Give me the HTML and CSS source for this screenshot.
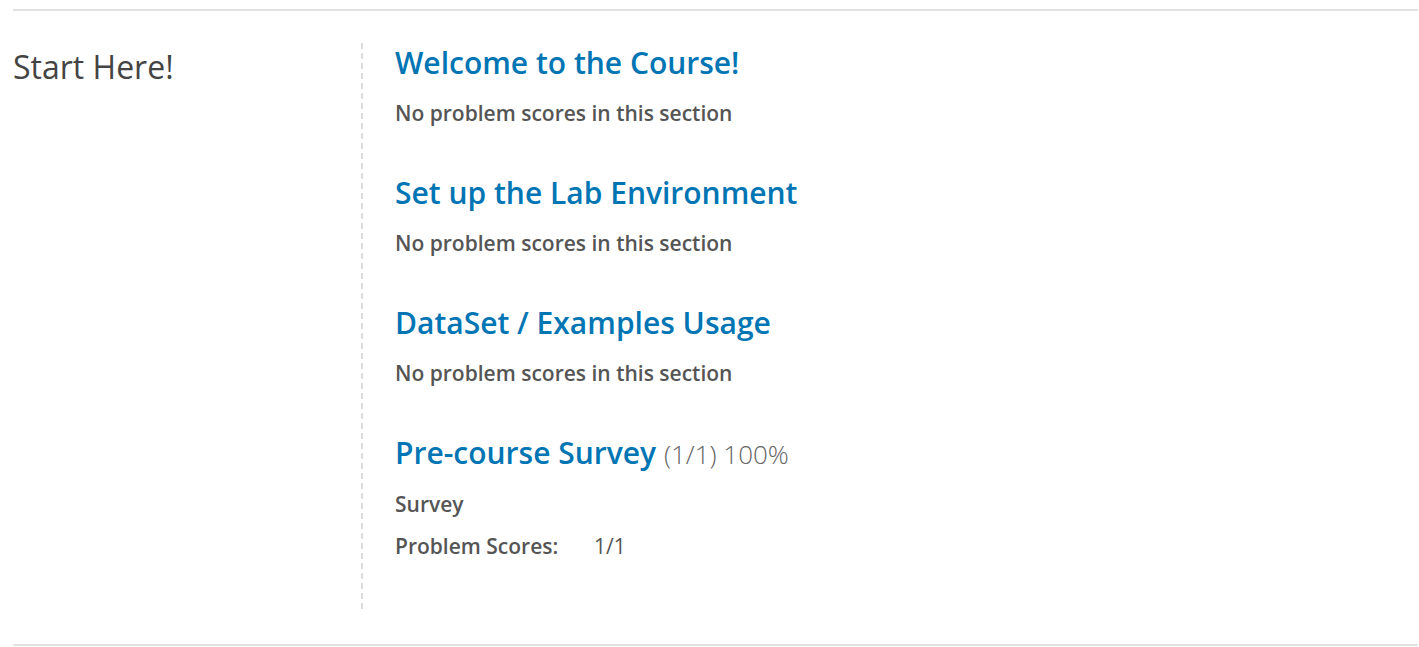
FILE: index.html
```html
<!DOCTYPE html>
<html lang="en">
<head>
<meta charset="utf-8">
<title>Progress</title>
<link rel="stylesheet" href="styles.css">
</head>
<body>
<div class="page">
  <div class="rule"></div>
  <section class="chapter">
    <h2 class="chapter-title">Start Here!</h2>
    <div class="sections">
      <div class="subsection">
        <h3 class="sub-title"><a href="#">Welcome to the Course!</a></h3>
        <p class="sub-note">No problem scores in this section</p>
      </div>
      <div class="subsection">
        <h3 class="sub-title"><a href="#">Set up the Lab Environment</a></h3>
        <p class="sub-note">No problem scores in this section</p>
      </div>
      <div class="subsection">
        <h3 class="sub-title"><a href="#">DataSet / Examples Usage</a></h3>
        <p class="sub-note">No problem scores in this section</p>
      </div>
      <div class="subsection">
        <h3 class="sub-title"><a href="#">Pre-course Survey</a> <span class="score">(1/1) 100%</span></h3>
        <p class="sub-note">Survey</p>
        <p class="sub-note scores"><span class="label">Problem Scores:</span><span class="value">1/1</span></p>
      </div>
    </div>
  </section>
  <div class="rule"></div>
</div>
</body>
</html>
```

FILE: styles.css
```css
html, body {
  margin: 0;
  padding: 0;
  background: #fff;
}
body {
  font-family: "Open Sans", "Noto Sans", sans-serif;
  color: #4e4e4e;
}
.page {
  padding: 9px 1px 0 13px;
}
.rule {
  height: 2px;
  background: #e2e2e2;
}
.chapter {
  display: flex;
  margin: 32px 0 33px;
}
.chapter-title {
  width: 348px;
  flex: none;
  margin: 0;
  padding-top: 4px;
  font-size: 32px;
  line-height: 40px;
  font-weight: 400;
  color: #444;
}
.sections {
  flex: 1;
  padding: 3px 0 50px 34px;
  background-image: repeating-linear-gradient(to bottom, #dcdcdc 0 6px, transparent 6px 10px);
  background-size: 2px 100%;
  background-repeat: no-repeat;
  background-position: 0 0;
}
.subsection {
  margin-bottom: 48px;
}
.subsection:last-child {
  margin-bottom: 0;
}
.sub-title {
  margin: 0;
  font-size: 30px;
  line-height: 34px;
  font-weight: 600;
}
.sub-title a {
  color: #0075b4;
  text-decoration: none;
}
.score {
  font-size: 26px;
  font-weight: 300;
  color: #666;
}
.sub-note {
  margin: 18px 0 0;
  font-size: 21px;
  line-height: 30px;
  font-weight: 600;
  color: #555;
}
.scores {
  margin-top: 12px;
}
.scores .label {
  display: inline-block;
  width: 199px;
}
.scores .value {
  font-weight: 400;
}
```
